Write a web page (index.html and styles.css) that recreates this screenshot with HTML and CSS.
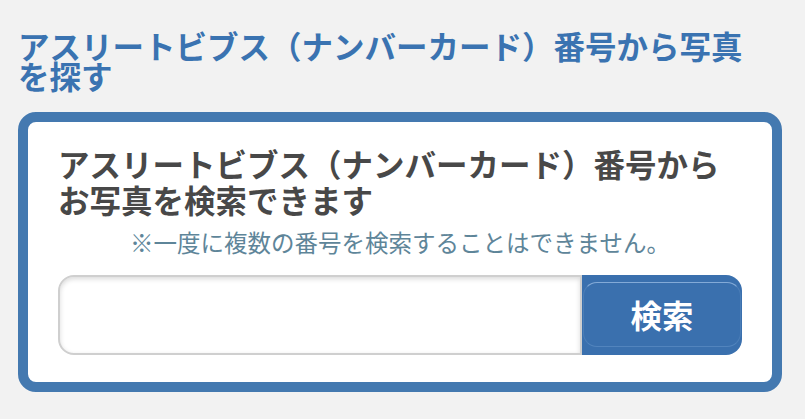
FILE: index.html
```html
<!DOCTYPE html>
<html lang="ja">
<head>
<meta charset="utf-8">
<title>アスリートビブス検索</title>
<link rel="stylesheet" href="styles.css">
</head>
<body>
<main class="page">
  <h2 class="title">アスリートビブス（ナンバーカード）番号から写真を探す</h2>
  <section class="card">
    <h3 class="lead">アスリートビブス（ナンバーカード）番号から<br>お写真を検索できます</h3>
    <p class="note">※一度に複数の番号を検索することはできません。</p>
    <form class="search" onsubmit="return false;">
      <input class="search-input" type="text" aria-label="番号">
      <button class="search-btn" type="submit"><span>検索</span></button>
    </form>
  </section>
</main>
</body>
</html>
```
FILE: styles.css
```css
* { box-sizing: border-box; }
html, body {
  margin: 0;
  padding: 0;
  background: #f2f2f2;
}
body {
  font-family: "Noto Sans CJK JP", "Noto Sans", sans-serif;
}
.page {
  padding: 30px 23px 0 18px;
}
.title {
  margin: 0;
  font-size: 31.5px;
  line-height: 30px;
  font-weight: 700;
  color: #3a73b1;
  max-width: 750px;
}
.card {
  margin-top: 22px;
  background: #fff;
  border: 10px solid #4479b0;
  border-radius: 18px;
  padding: 24px 30px 27px;
}
.lead {
  margin: 0;
  font-size: 31.5px;
  line-height: 35.5px;
  font-weight: 700;
  color: #484848;
}
.note {
  margin: 10px 0 0;
  text-align: center;
  font-size: 23.5px;
  line-height: 30px;
  font-weight: 400;
  color: #5e8599;
}
.search {
  margin-top: 18px;
  display: flex;
  height: 80px;
}
.search-input {
  flex: 1;
  min-width: 0;
  height: 80px;
  margin: 0;
  border: 2px solid #cfcfcf;
  border-radius: 16px 0 0 16px;
  background: #fff;
  box-shadow: inset 0 2px 5px rgba(0,0,0,0.15);
  font-size: 24px;
  padding: 0 16px;
  outline: none;
}
.search-btn {
  position: relative;
  width: 160px;
  height: 80px;
  margin: 0;
  border: 0;
  border-radius: 0 16px 16px 0;
  background: #3a70ae;
  color: #fff;
  font-family: "Noto Sans CJK JP", "Noto Sans", sans-serif;
  font-size: 31.5px;
  font-weight: 700;
  line-height: 1;
  cursor: pointer;
  padding: 0;
}
.search-btn::before {
  content: "";
  position: absolute;
  top: 7px;
  bottom: 8px;
  left: 1px;
  right: 1px;
  border-radius: 14px;
  border-top: 1.5px solid rgba(150, 185, 225, 0.8);
  border-bottom: 1px solid rgba(130, 170, 215, 0.35);
  border-left: 1px solid rgba(130, 170, 215, 0.25);
  border-right: 1px solid rgba(130, 170, 215, 0.25);
}
.search-btn span {
  position: relative;
}
```
